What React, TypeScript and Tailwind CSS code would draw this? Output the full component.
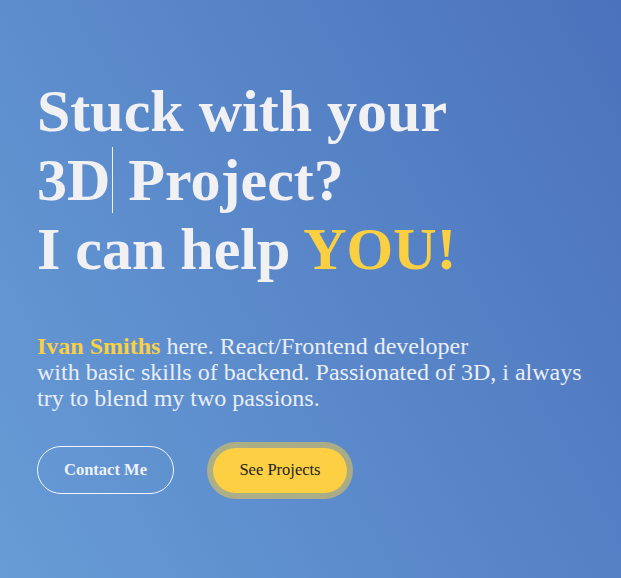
const Hero = () => (
  <section
    className="min-h-screen w-full bg-[linear-gradient(60deg,#679cd6,#4b72bc)] px-[37px] pt-[77px] text-[#f1f1f3]"
    style={{ fontFamily: '"Liberation Serif", "Times New Roman", serif' }}
  >
    <h1 className="text-[60px] font-bold leading-[69px]">
      Stuck with your
      <br />
      <span className="border-r border-[#f1f1f3] pr-[2px]">3D</span> Project?
      <br />
      I can help <span className="text-[#fbcf42]">YOU!</span>
    </h1>

    <p className="mt-[49px] text-[24px] leading-[26px] text-[#eaeef7]">
      <span className="font-bold text-[#fbcf42]">Ivan Smiths</span> here. React/Frontend developer
      <br />
      with basic skills of backend. Passionated of 3D, i always try to blend my two passions.
    </p>

    <div className="mt-[35px] flex items-center gap-[39px]">
      <button className="flex h-[48px] w-[137px] items-center justify-center rounded-full border border-[#f4f6fa] text-[16.5px] font-bold text-[#eef1f7]">
        Contact Me
      </button>
      <button className="flex h-[45px] w-[134px] items-center justify-center rounded-full bg-[#fcd042] text-[16.5px] text-[#222] shadow-[0_0_0_6px_rgba(250,206,66,0.5)]">
        See Projects
      </button>
    </div>
  </section>
);

export default function App() {
  return <Hero />;
}
